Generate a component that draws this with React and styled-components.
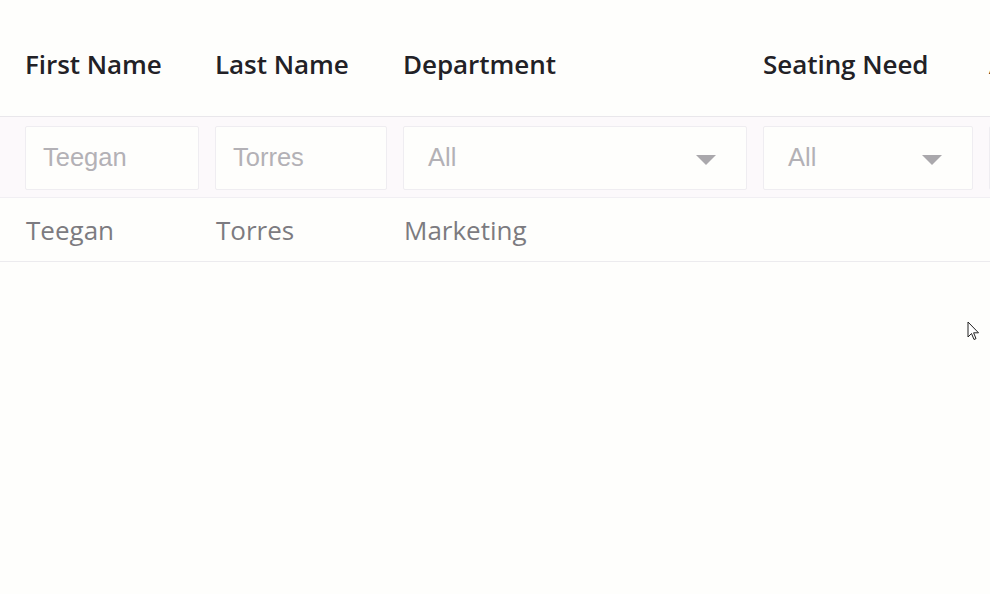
import React from "react";
import styled, { createGlobalStyle } from "styled-components";

const Global = createGlobalStyle`
  html, body { margin: 0; padding: 0; background: #fefefc; overflow: hidden; }
  body { width: 990px; height: 594px; font-family: "Open Sans", sans-serif; }
`;

const Page = styled.div`
  position: relative;
  width: 990px;
  height: 594px;
  overflow: hidden;
  background: #fefefc;
`;

const Table = styled.div`
  width: 1300px;
  display: flex;
  flex-direction: column;
`;

const Row = styled.div`
  display: grid;
  grid-template-columns: 174px 172px 344px 210px 200px;
  column-gap: 16px;
  padding-left: 25px;
  align-items: center;
  height: ${(p) => p.$h}px;
  background: ${(p) => p.$bg || "transparent"};
  border-bottom: 1px solid ${(p) => p.$line || "#ebe9ed"};
  box-sizing: content-box;
`;

const HeadCell = styled.div`
  font-family: "Open Sans", sans-serif;
  font-weight: 600;
  font-size: 26px;
  color: #222126;
  white-space: nowrap;
  padding-top: 12px;
  letter-spacing: -0.05px;
`;

const Field = styled.div`
  position: relative;
  border: 1px solid #efedf1;
  border-radius: 2px;
  background: #fefefc;
  display: flex;
  align-items: center;
  padding-left: ${(p) => (p.$select ? 24 : 17)}px;
  margin-top: 1px;
  font-family: "Liberation Sans", Arial, sans-serif;
  font-size: 25.5px;
  color: #b3b1b6;
  box-sizing: border-box;
  height: 64px;
`;

const Caret = styled.svg`
  position: absolute;
  right: 30px;
  top: 28px;
  width: 20px;
  height: 10px;
`;

const DataCell = styled.div`
  font-family: "Open Sans", sans-serif;
  font-size: 26px;
  color: #7c7b80;
  padding-left: 1px;
  white-space: nowrap;
`;

const Cursor = styled.svg`
  position: absolute;
  left: 967px;
  top: 321px;
  width: 13px;
  height: 21px;
`;

function Select({ label }) {
  return (
    <Field $select>
      {label}
      <Caret viewBox="0 0 20 10">
        <path d="M0 0 H20 L10 10 Z" fill="#aaa8ac" />
      </Caret>
    </Field>
  );
}

export default function App() {
  return (
    <Page>
      <Global />
      <Table>
        <Row $h={116} $line="#e9e7eb">
          <HeadCell>First Name</HeadCell>
          <HeadCell>Last Name</HeadCell>
          <HeadCell>Department</HeadCell>
          <HeadCell>Seating Need</HeadCell>
          <HeadCell>Attending</HeadCell>
        </Row>
        <Row $h={80} $bg="#fcf9fb" $line="#f1eff3">
          <Field>Teegan</Field>
          <Field>Torres</Field>
          <Select label="All" />
          <Select label="All" />
          <Select label="All" />
        </Row>
        <Row $h={63} $line="#ecebee">
          <DataCell>Teegan</DataCell>
          <DataCell>Torres</DataCell>
          <DataCell>Marketing</DataCell>
          <DataCell />
          <DataCell />
        </Row>
      </Table>
      <Cursor viewBox="0 0 13 21">
        <path
          d="M1 1 L1 16 L4.5 12.5 L7 18.5 L9 17.6 L6.6 11.8 L11.5 11.8 Z"
          fill="#ffffff"
          stroke="#222"
          strokeWidth="1"
          strokeLinejoin="miter"
        />
      </Cursor>
    </Page>
  );
}
